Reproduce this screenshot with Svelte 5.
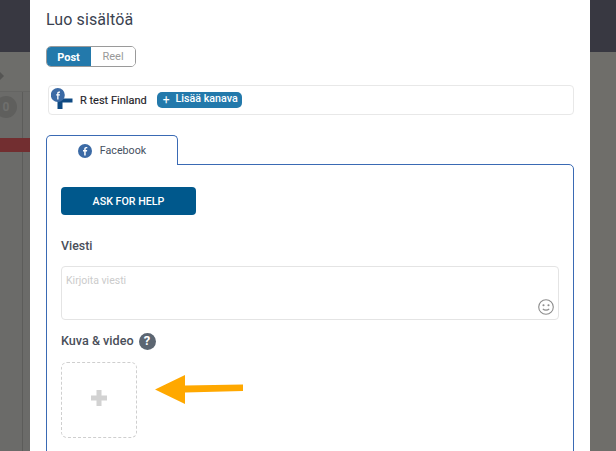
<script>
  let mode = $state('Post');
  let message = $state('');
</script>

<div class="page">
  <aside class="left">
    <div class="topbar"></div>
    <div class="crumb"><span class="chevron"></span></div>
    <div class="cells">
      <span class="counter">0</span>
    </div>
    <div class="alert"></div>
    <div class="cells rest"></div>
  </aside>

  <main class="modal">
    <h1>Luo sisältöä</h1>

    <div class="toggle">
      <button class:on={mode === 'Post'} onclick={() => (mode = 'Post')}>Post</button>
      <button class:on={mode === 'Reel'} onclick={() => (mode = 'Reel')}>Reel</button>
    </div>

    <div class="channels">
      <span class="avatar">
        <svg width="25" height="25" viewBox="0 0 25 25">
          <rect x="9" y="12.500" width="12.500" height="4" fill="#0f4a83" />
          <rect x="6.500" y="14" width="5" height="9" fill="#0f4a83" />
          <circle cx="6.800" cy="9" r="7" fill="#3b6aa5" />
          <path d="M7.500 13.500V9.500h1.400V8.200H7.500V7.500c0-.5.200-.8.800-.8H9V5.500H8c-1.200 0-1.800.8-1.800 1.800v.9h-1V9.500h1v4z" fill="#fff" />
        </svg>
      </span>
      <span class="channel-name">R test Finland</span>
      <button class="add"><span class="plus">+</span>Lisää kanava</button>
    </div>

    <div class="tab">
      <svg width="14" height="14" viewBox="0 0 14 14">
        <circle cx="7" cy="7" r="7" fill="#3b6aa5" />
        <path d="M7.700 11.500V7.500h1.300l.2-1.500H7.700V5.100c0-.5.200-.8.800-.8h.8V3c-.3 0-.7-.1-1.100-.1-1.200 0-2 .7-2 2V6H5v1.500h1.200v4z" fill="#fff" />
      </svg>
      <span>Facebook</span>
    </div>

    <section class="panel">
      <button class="help">ASK FOR HELP</button>

      <h2 class="viesti">Viesti</h2>
      <div class="field">
        <textarea placeholder="Kirjoita viesti" bind:value={message}></textarea>
        <svg class="smile" width="16" height="16" viewBox="0 0 16 16" fill="none" stroke="#8c8c8c" stroke-width="1.100">
          <circle cx="8" cy="8" r="7.300" />
          <circle cx="5.500" cy="6.300" r=".5" fill="#8c8c8c" />
          <circle cx="10.500" cy="6.300" r=".5" fill="#8c8c8c" />
          <path d="M4.800 9.800c1.600 1.800 4.800 1.800 6.400 0" />
        </svg>
      </div>

      <h2 class="kuva">Kuva &amp; video <span class="q">?</span></h2>
      <button class="upload" aria-label="Lisää kuva">
        <svg width="16" height="16" viewBox="0 0 16 16"><path d="M5.500 0h5v5.500H16v5h-5.500V16h-5v-5.500H0v-5h5.500z" fill="#d2d2d2" /></svg>
      </button>
    </section>

    <svg class="arrow" width="90" height="32" viewBox="0 0 90 32">
      <path d="M0 15.500 30 1V11.500L88 10.500V17L30 18.500V30z" fill="#ffa800" />
    </svg>
  </main>

  <aside class="right">
    <div class="topbar"></div>
    <div class="fill"></div>
  </aside>
</div>

<style>
  :global(body) {
    margin: 0;
    font-family: Roboto, "Liberation Sans", sans-serif;
  }

  .page {
    display: flex;
    width: 616px;
    height: 451px;
    overflow: hidden;
    background: #6b6b69;
  }

  .left {
    width: 30px;
    flex: none;
    display: flex;
    flex-direction: column;
    background: #6b6b69;
  }

  .right {
    width: 26px;
    flex: none;
    display: flex;
    flex-direction: column;
  }

  .topbar {
    height: 52px;
    flex: none;
    background: #383841;
  }

  .fill {
    flex: 1;
    background: #6f6e6a;
  }

  .crumb {
    height: 40px;
    flex: none;
    box-sizing: border-box;
    padding-top: 19px;
    border-bottom: 1px solid #656563;
    background: #6d6d6a;
  }

  .chevron {
    display: block;
    width: 0;
    height: 0;
    margin-left: -1px;
    border-left: 5px solid #555553;
    border-top: 5px solid transparent;
    border-bottom: 5px solid transparent;
  }

  .cells {
    height: 46px;
    flex: none;
    box-sizing: border-box;
    padding: 4px 0 0 0;
    margin-right: 7px;
    border-right: 1px solid #5c5c5a;
    position: relative;
  }

  .cells.rest {
    flex: 1;
  }

  .counter {
    display: flex;
    align-items: center;
    justify-content: center;
    width: 22px;
    height: 22px;
    margin: 0 0 0 -5px;
    border-radius: 50%;
    background: #5f5f5d;
    color: #6f6f6d;
    font-size: 12px;
    font-weight: 700;
  }

  .alert {
    height: 14px;
    flex: none;
    background: #722e30;
  }

  .modal {
    position: relative;
    width: 560px;
    flex: none;
    box-sizing: border-box;
    padding: 0 16px;
    background: #fff;
  }

  h1 {
    margin: 0;
    padding-top: 9px;
    font-size: 16px;
    line-height: 21px;
    font-weight: 400;
    color: #3a4250;
    letter-spacing: 0.1px;
  }

  .toggle {
    display: flex;
    width: 90px;
    height: 21px;
    margin-top: 16px;
    box-sizing: border-box;
    border: 1px solid #9a9a9a;
    border-radius: 5px;
    overflow: hidden;
  }

  .toggle button {
    flex: 1;
    padding: 0;
    border: 0;
    background: #fff;
    color: #999;
    font: 400 11px Roboto, sans-serif;
  }

  .toggle button.on {
    flex: none;
    width: 45px;
    margin: -1px 0 -1px -1px;
    padding-top: 1px;
    background: #2379ab;
    color: #fff;
    font-weight: 700;
  }

  .channels {
    display: flex;
    align-items: center;
    width: 526px;
    height: 30px;
    box-sizing: border-box;
    margin: 18px 0 0 2px;
    border: 1px solid #e8e8e8;
    border-radius: 4px;
    position: relative;
  }

  .avatar {
    display: block;
    width: 25px;
    height: 25px;
    margin: -3px 0 0 2px;
  }

  .channel-name {
    margin-left: 4px;
    font-size: 11px;
    font-weight: 400;
    color: #1f2329;
    -webkit-text-stroke: 0.15px #1f2329;
  }

  .add {
    display: flex;
    align-items: center;
    height: 16px;
    margin-left: 10px;
    padding: 0 4px 3px 6px;
    box-sizing: border-box;
    border: 0;
    border-radius: 5px;
    background: #2379ab;
    color: #fff;
    font: 500 10.7px Roboto, sans-serif;
  }

  .plus {
    margin: 3px 6px 0 0;
    font-weight: 400;
    font-size: 12px;
  }

  .tab {
    position: relative;
    z-index: 1;
    display: flex;
    align-items: center;
    justify-content: center;
    gap: 8px;
    width: 132px;
    height: 30px;
    box-sizing: border-box;
    margin-top: 20px;
    border: 1px solid #3a6ab4;
    border-bottom: 0;
    border-radius: 5px 5px 0 0;
    background: #fff;
    color: #44505f;
    font-size: 10.7px;
  }

  .panel {
    width: 528px;
    height: 320px;
    box-sizing: border-box;
    margin-top: -1px;
    padding: 22px 14px 0;
    border: 1px solid #3a6ab4;
    border-radius: 0 5px 0 0;
  }

  .help {
    display: block;
    width: 135px;
    height: 28px;
    padding: 0;
    border: 0;
    border-radius: 4px;
    background: #00588c;
    color: #fff;
    font: 500 10.7px Roboto, sans-serif;
  }

  h2 {
    margin: 0;
    font-size: 12.4px;
    line-height: 16px;
    font-weight: 500;
    color: #4a4f5a;
  }

  .viesti {
    margin-top: 23px;
  }

  .field {
    position: relative;
    width: 498px;
    height: 54px;
    margin-top: 12px;
  }

  textarea {
    display: block;
    width: 100%;
    height: 100%;
    box-sizing: border-box;
    padding: 7px 4px;
    border: 1px solid #e4e4e4;
    border-radius: 4px;
    outline: 0;
    resize: none;
    font: 400 10.5px Roboto, sans-serif;
  }

  textarea::placeholder {
    color: #cbcbcb;
  }

  .smile {
    position: absolute;
    right: 5px;
    bottom: 5px;
  }

  .kuva {
    display: flex;
    align-items: center;
    gap: 5px;
    margin-top: 12px;
    height: 18px;
    font-size: 12.6px;
  }

  .q {
    display: inline-flex;
    align-items: center;
    justify-content: center;
    width: 17px;
    height: 17px;
    border-radius: 50%;
    background: #5c6672;
    color: #fff;
    font-size: 13px;
    font-weight: 700;
  }

  .upload {
    display: flex;
    align-items: center;
    justify-content: center;
    width: 76px;
    height: 76px;
    margin-top: 12px;
    padding: 0 0 4px;
    box-sizing: border-box;
    border: 1px dashed #cfcfcf;
    border-radius: 6px;
    background: #fff;
  }

  .arrow {
    position: absolute;
    left: 125px;
    top: 374px;
  }
</style>
